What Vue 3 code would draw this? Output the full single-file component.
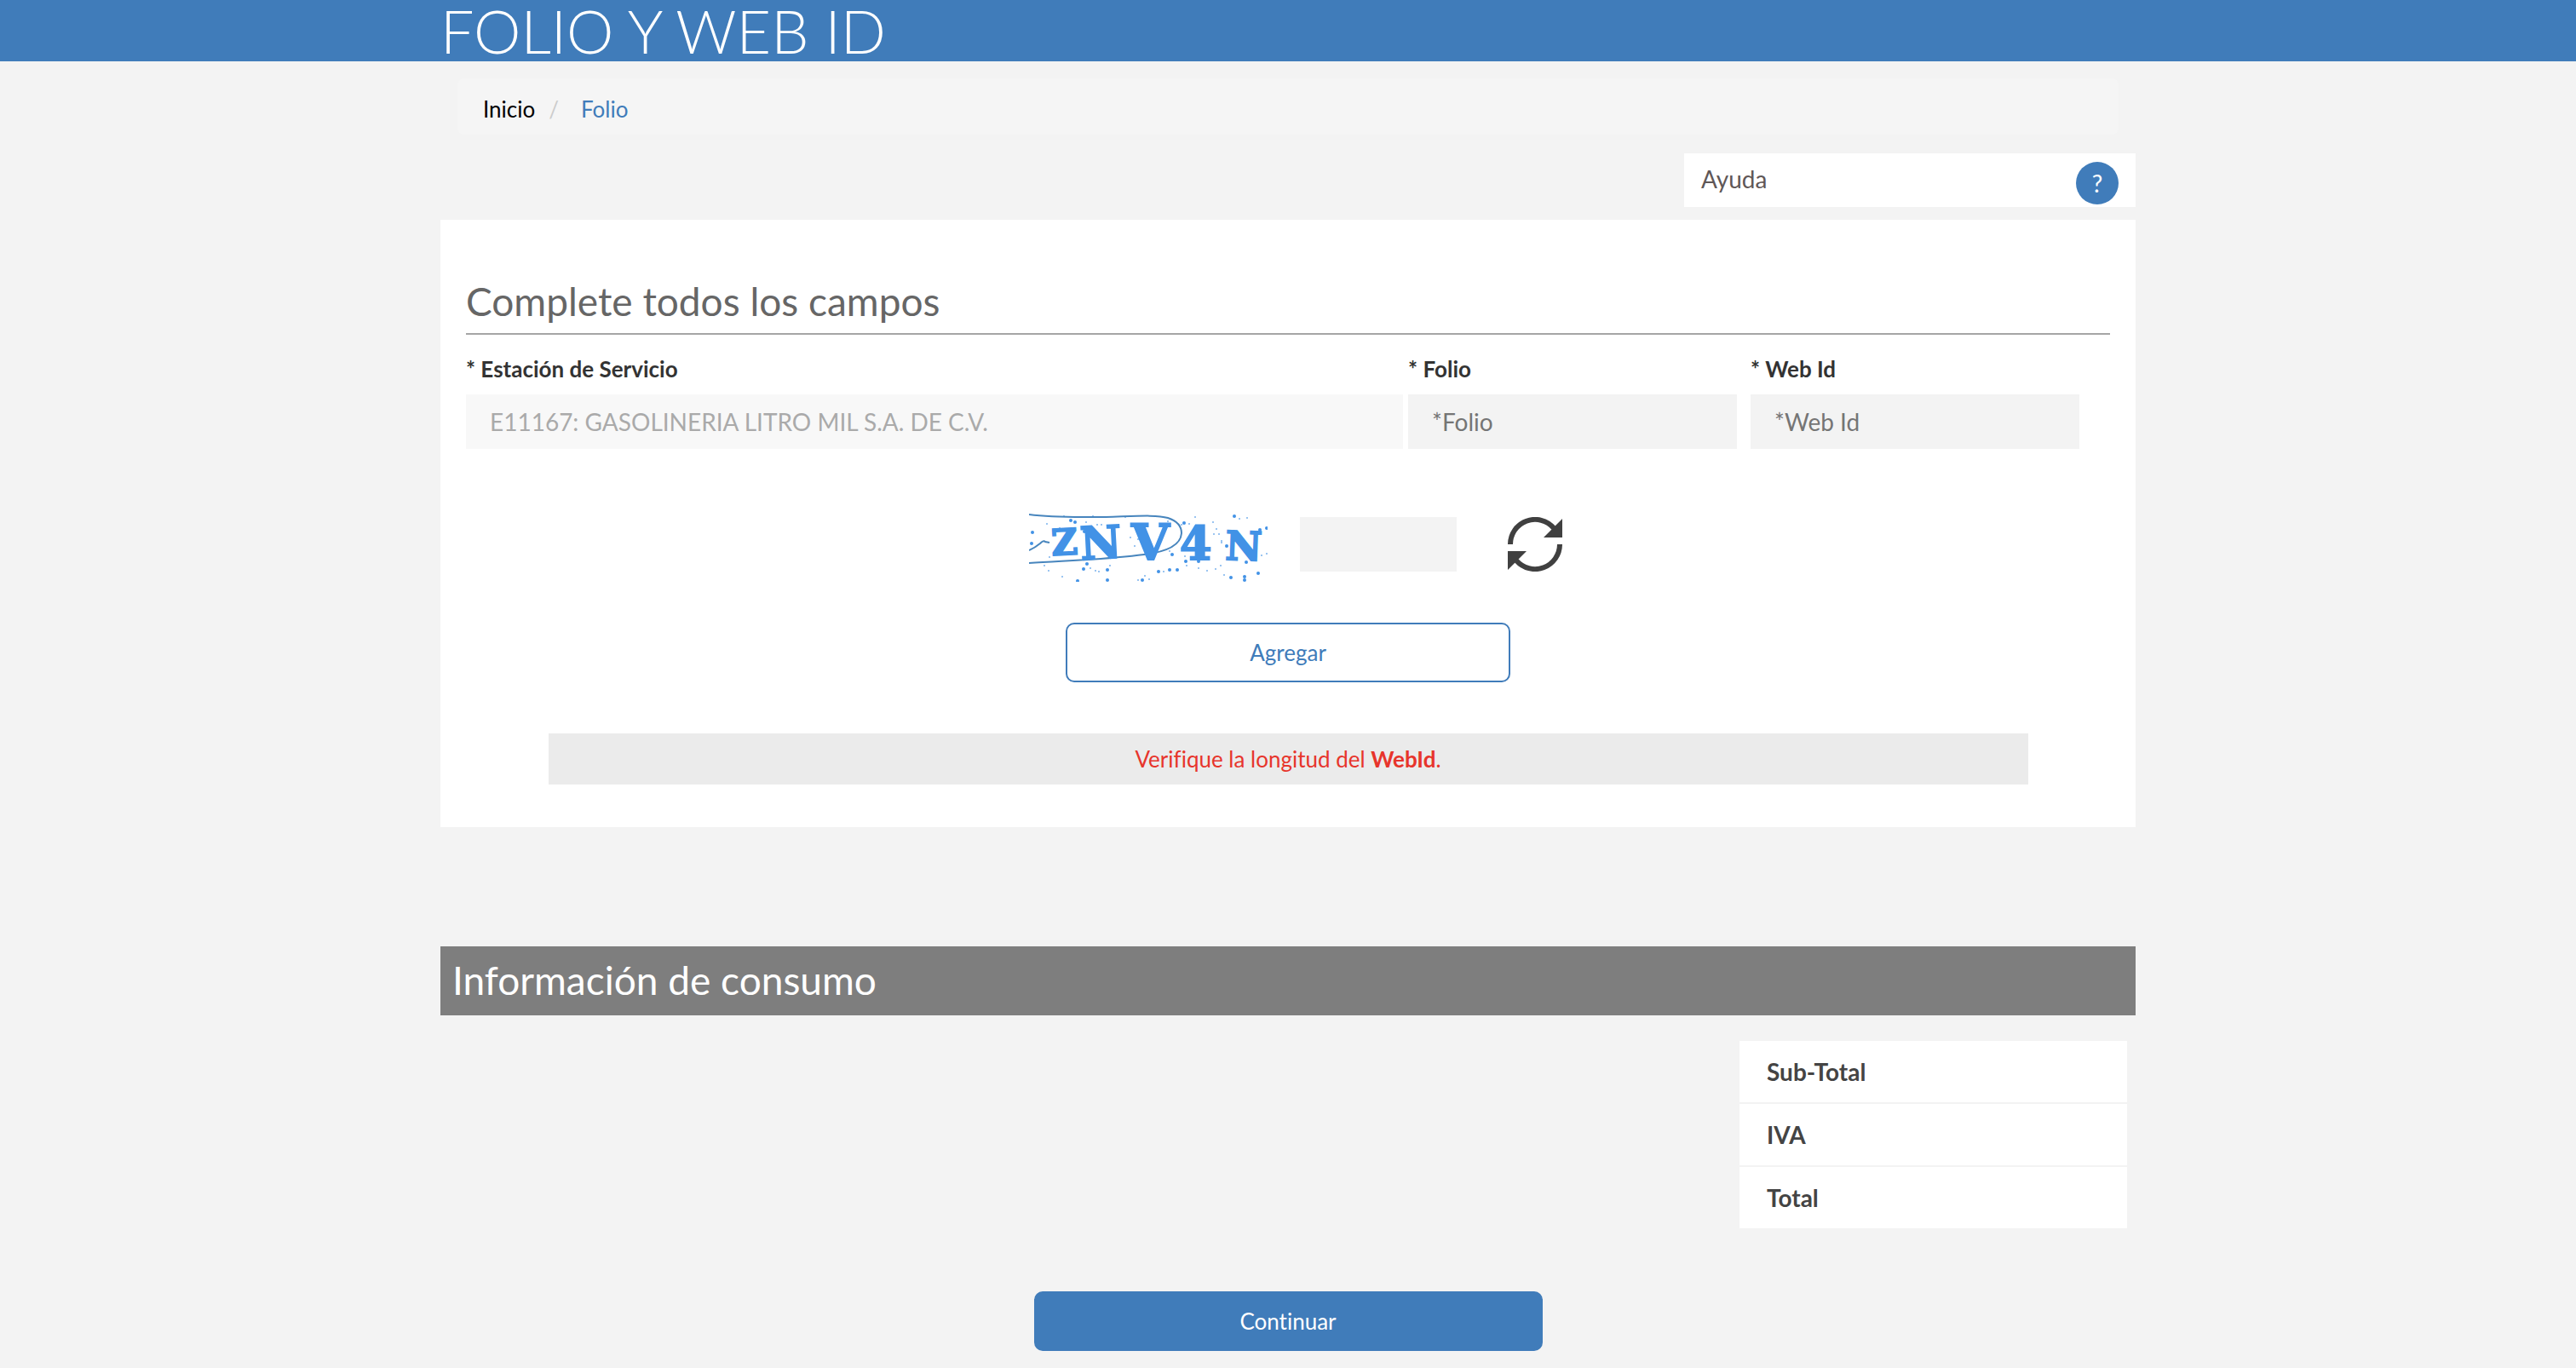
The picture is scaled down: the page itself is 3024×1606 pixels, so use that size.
<script setup>
import { ref } from 'vue'

const station = ref('E11167: GASOLINERIA LITRO MIL S.A. DE C.V.')
const folio = ref('')
const webId = ref('')
const captcha = ref('')
const totals = ['Sub-Total', 'IVA', 'Total']

const letters = [
  { char: 'Z', x: 27, y: 49, size: 42, angle: -3 },
  { char: 'N', x: 61, y: 54, size: 53, angle: -3 },
  { char: 'V', x: 120, y: 54, size: 58, angle: 0 },
  { char: '4', x: 177, y: 54, size: 54, angle: 0 },
  { char: 'N', x: 230, y: 54, size: 47, angle: 2 }
]

// x, y, radius of the speckles behind the captcha letters
const specks = [
  [4, 22, 2], [3, 35, 2], [21, 12, 1], [49, 8, 2], [54, 10, 2], [65, 21, 2], [36, 17, 1],
  [67, 10, 1], [80, 13, 1], [85, 13, 1], [134, 13, 1], [155, 13, 2], [163, 9, 1], [179, 13, 1],
  [182, 11, 2], [188, 12, 1], [195, 4, 1], [216, 10, 1], [241, 3, 2], [247, 6, 1], [256, 5, 1],
  [220, 18, 1], [217, 24, 1], [223, 24, 1], [226, 32, 1], [232, 38, 2], [226, 34, 1],
  [271, 19, 2], [279, 17, 2], [273, 49, 1], [279, 47, 1], [24, 51, 1], [18, 61, 1], [23, 67, 1],
  [39, 74, 1], [57, 79, 2], [64, 65, 2], [68, 59, 2], [72, 64, 1], [78, 67, 1], [82, 68, 1],
  [92, 66, 2], [95, 61, 1], [92, 78, 2], [128, 78, 1], [133, 78, 2], [136, 73, 1], [141, 77, 1],
  [152, 68, 2], [158, 68, 1], [165, 66, 2], [174, 66, 2], [168, 48, 2], [183, 50, 1], [184, 56, 2],
  [185, 61, 1], [199, 56, 2], [199, 64, 1], [209, 67, 1], [219, 65, 1], [225, 61, 1], [229, 72, 1],
  [237, 75, 2], [253, 74, 2], [253, 78, 2], [255, 57, 2], [269, 70, 2], [204, 29, 1], [124, 38, 1],
  [128, 30, 1], [119, 28, 1], [165, 44, 1], [142, 47, 1], [41, 3, 1], [75, 3, 1], [113, 4, 1]
]
</script>

<template>
  <div class="page">
    <header class="banner">
      <h1 class="wrap title">FOLIO Y WEB ID</h1>
    </header>

    <main class="wrap">
      <nav class="crumbs" aria-label="Ruta">
        <a class="home" href="#">Inicio</a>
        <span class="slash">/</span>
        <a href="#">Folio</a>
      </nav>

      <div class="help">
        <span>Ayuda</span>
        <button class="help-button" type="button">?</button>
      </div>

      <form class="panel" @submit.prevent>
        <h2 class="heading">Complete todos los campos</h2>

        <div class="fields">
          <div class="field wide">
            <label for="station">* Estación de Servicio</label>
            <input id="station" v-model="station" type="text" disabled />
          </div>
          <div class="field">
            <label for="folio">* Folio</label>
            <input id="folio" v-model="folio" type="text" placeholder="*Folio" />
          </div>
          <div class="field last">
            <label for="webid">* Web Id</label>
            <input id="webid" v-model="webId" type="text" placeholder="*Web Id" />
          </div>
        </div>

        <div class="captcha">
          <svg class="captcha-image" viewBox="0 0 280 80" width="280" height="80">
            <circle v-for="(s, i) in specks" :key="i" :cx="s[0]" :cy="s[1]" :r="s[2]" :opacity="s[2] > 1 ? 1 : 0.7" />
            <path class="scribble" d="M0 1C30 5 60 4 90 4C125 3 150 1 163 5C175 9 179 16 179 23C178 38 160 45 135 48C90 54 45 55 0 58" />
            <path class="scribble" d="M0 43Q7 40 13 35Q17 31 19 33L24 34" />
            <text
              v-for="l in letters"
              :key="l.x"
              :x="l.x"
              :y="l.y"
              :font-size="l.size"
              :transform="`rotate(${l.angle} ${l.x} ${l.y})`"
            >{{ l.char }}</text>
          </svg>
          <input v-model="captcha" class="captcha-input" type="text" aria-label="Captcha" />
          <button class="refresh" type="button" aria-label="Actualizar">
            <svg viewBox="0 0 64 64" width="64" height="64">
              <path class="arc" d="M3 32A29 29 0 0 1 54 13" />
              <path class="arc" d="M61 32A29 29 0 0 1 10 51" />
              <path d="M64 2V24H42L51 15ZM0 62V40H22L13 49Z" />
            </svg>
          </button>
        </div>

        <button class="button outline" type="submit">Agregar</button>

        <p class="alert" role="alert">Verifique la longitud del <b>WebId</b>.</p>
      </form>

      <h2 class="section">Información de consumo</h2>

      <table class="totals">
        <tbody>
          <tr v-for="t in totals" :key="t">
            <th scope="row">{{ t }}</th>
            <td></td>
          </tr>
        </tbody>
      </table>

      <button class="button solid" type="button">Continuar</button>
    </main>
  </div>
</template>

<style>
body {
  margin: 0;
  background: #f3f3f3;
}
</style>

<style scoped>
* {
  box-sizing: border-box;
}

.page {
  font-family: Lato, "Open Sans", sans-serif;
  font-size: 26px;
  font-variant-ligatures: none;
  line-height: 40px;
  color: #333;
}

.wrap {
  max-width: 1990px;
  margin: 0 auto;
}

.banner {
  background: #407cba;
}

.title {
  font-size: 70px;
  font-weight: 300;
  line-height: 72px;
  color: #fff;
}

a {
  color: #407cba;
  text-decoration: none;
}

.crumbs {
  display: flex;
  margin: 20px 20px 22px;
  padding: 16px 30px 10px;
  border-radius: 8px;
  background: #f5f5f5;
}

.home {
  color: #000;
}

.slash {
  margin: 0 26px 0 16px;
  color: #ccc;
}

.help {
  display: flex;
  justify-content: space-between;
  align-items: flex-start;
  width: 530px;
  height: 63px;
  margin: 0 0 15px auto;
  padding: 10px 20px 0;
  background: #fff;
  font-size: 28px;
  color: #5f5757;
}

.help-button {
  width: 50px;
  height: 50px;
  padding: 0;
  border: 0;
  border-radius: 50%;
  background: #407cba;
  font: inherit;
  color: #fff;
}

.panel {
  padding: 64px 30px 50px;
  background: #fff;
}

.heading {
  margin: 0 0 30px;
  padding-bottom: 5px;
  border-bottom: 2px solid #a5a5a5;
  font-size: 46px;
  font-weight: 400;
  line-height: 64px;
  color: #666;
}

.fields {
  display: flex;
}

.field {
  display: flex;
  flex-direction: column;
  width: 20%;
}

.field.wide {
  width: 57%;
  margin-right: 6px;
}

.field.last {
  margin-left: 16px;
}

.field label {
  margin: -10px 0 10px;
  font-weight: 700;
}

.field input,
.captcha-input {
  width: 100%;
  height: 64px;
  padding: 0 28px;
  border: 0;
  background: #f3f3f3;
  font: inherit;
  font-size: 28px;
  color: #666;
}

.field input::placeholder {
  color: #757575;
}

.field input:disabled {
  background: #f8f8f8;
  color: #aaa;
}

.captcha {
  display: flex;
  justify-content: center;
  align-items: flex-start;
  margin: 76px 0 48px;
  padding-left: 18px;
}

.captcha-image {
  fill: #4292e6;
  font-family: "DejaVu Serif", serif;
  font-weight: 700;
}

.captcha-image text {
  stroke: #4292e6;
  stroke-width: 2;
}

.scribble {
  fill: none;
  stroke: #4785bd;
  stroke-width: 2;
}

.captcha .captcha-input {
  width: 184px;
  margin: 4px 60px 0 38px;
}

.refresh {
  width: 64px;
  height: 64px;
  margin: 4px 0 0;
  padding: 0;
  border: 0;
  background: none;
  fill: #404040;
}

.refresh svg {
  display: block;
}

.arc {
  fill: none;
  stroke: #404040;
  stroke-width: 6;
}

.button {
  display: block;
  height: 70px;
  margin: 0 auto;
  padding: 0;
  border: 2px solid #407cba;
  border-radius: 10px;
  font: inherit;
}

.outline {
  width: 27%;
  background: #fff;
  color: #407cba;
}

.solid {
  width: 30%;
  margin-bottom: 22px;
  background: #407cba;
  color: #fff;
}

.alert {
  width: 90%;
  margin: 60px auto 0;
  padding: 10px;
  background: #ebebeb;
  text-align: center;
  color: #e7352c;
}

.section {
  margin: 140px 0 30px;
  padding: 8px 14px 9px;
  background: #7e7e7e;
  font-size: 46px;
  font-weight: 400;
  line-height: 64px;
  color: #fff;
}

.totals {
  width: 455px;
  margin: 0 10px 72px auto;
  border-spacing: 0 2px;
  border-collapse: separate;
  margin-top: -2px;
}

.totals th,
.totals td {
  height: 72px;
  padding: 0 32px;
  background: #fff;
}

.totals th {
  font-size: 28px;
  font-weight: 700;
  text-align: left;
  color: #444;
}
</style>
